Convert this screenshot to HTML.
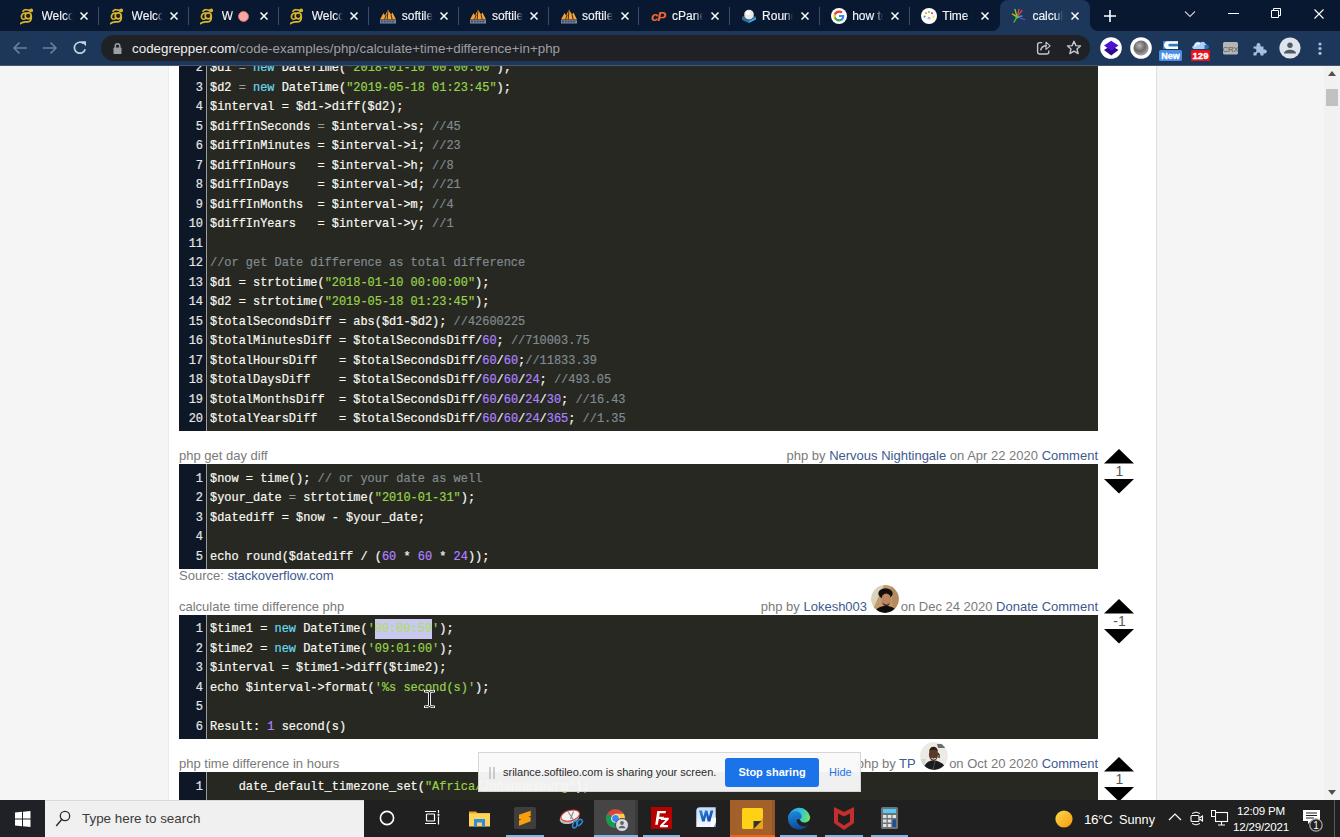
<!DOCTYPE html>
<html><head><meta charset="utf-8">
<style>
*{margin:0;padding:0;box-sizing:border-box}
html,body{width:1340px;height:837px;overflow:hidden;background:#f5f5f5;font-family:"Liberation Sans",sans-serif}
#tabs{position:absolute;left:0;top:0;width:1340px;height:31px;background:#081830}
#activetab{position:absolute;left:1000px;top:0;width:90px;height:31px;background:#1c375a;border-radius:8px 8px 0 0}
#activetab:before,#activetab:after{content:"";position:absolute;bottom:0;width:8px;height:8px}
#activetab:before{left:-8px;background:radial-gradient(circle at 0 0,transparent 7.5px,#1c375a 8.5px)}
#activetab:after{right:-8px;background:radial-gradient(circle at 100% 0,transparent 7.5px,#1c375a 8.5px)}
.ticon{position:absolute;top:8px;width:16px;height:16px}
.ticon svg{display:block}
.ttitle{position:absolute;top:8px;height:16px;font-size:12px;line-height:16px;color:#f2f4f7;white-space:nowrap;-webkit-text-stroke:.15px #f2f4f7;overflow:hidden;-webkit-mask-image:linear-gradient(90deg,#000 75%,transparent 100%)}
.tclose{position:absolute;top:12px;width:8px;height:8px}
.tclose svg{display:block}
.tsep{position:absolute;top:7px;width:1px;height:18px;background:#3e4d63}
.rec{position:absolute;top:10.5px;width:11px;height:11px;border-radius:50%;background:#f7a9a3;border:1.6px solid #e0625c}
#toolbar{position:absolute;left:0;top:31px;width:1340px;height:35px;background:#1c375a;border-bottom:1px solid #45566f}
#omni{position:absolute;left:101px;top:35px;width:989px;height:25.7px;border-radius:13px;background:#202124}
.url{position:absolute;left:31px;top:1px;line-height:26px;font-size:13.38px;color:#9aa0a6;white-space:nowrap}
.url b{font-weight:normal;color:#eef0f2}
.ti{position:absolute}
.ti svg{display:block}
#page{position:absolute;left:0;top:66px;width:1340px;height:734px;background:#f5f5f5;overflow:hidden}
#content{position:absolute;left:168px;top:0;width:988px;height:734px;background:#fff;border-left:1px solid #ebebeb}
#rightbg{position:absolute;left:1156px;top:0;width:168px;height:734px;background:#f5f5f5;border-left:1px solid #e0e0e0}
#scroll{position:absolute;left:1324px;top:0;width:16px;height:734px;background:#f1f1f1}
#thumb{position:absolute;left:2px;top:23px;width:12px;height:17px;background:#c1c1c1}
#taskbar{position:absolute;left:0;top:800px;width:1340px;height:37px;background:#202020}
.code{position:absolute;left:179px;width:919px;background:#272822;font-family:"Liberation Mono",monospace;font-size:11.94px;line-height:19.5px;white-space:pre;color:#f8f8f2;-webkit-text-stroke:0.2px}
.gut{position:absolute;left:0;top:0;bottom:0;width:27.5px;background:#0e1726;border-right:1.5px solid #9c9e9a}
.ln{position:absolute;left:0;width:24px;text-align:right;color:#e6e6e6}
.tx{position:absolute;left:31px}
.k{color:#66d9ef}.s{color:#96d248}.c{color:#808a8f}.n{color:#ae81ff}.o{color:#9a9a90}.sel{background:#c9c9ef;color:#b2dc6a;padding:2.8px 0}
.ttl{position:absolute;left:179px;font-size:13px;color:#7a7a7a;white-space:nowrap;line-height:15px}
.meta{position:absolute;right:242px;font-size:13px;color:#7a7a7a;white-space:nowrap;line-height:15px}
.lk{color:#40598f}
.vt{position:absolute;display:block}
.vn{position:absolute;left:1104.5px;width:30px;text-align:center;font-size:14px;line-height:15px;color:#555}
.avw{display:inline-block;position:relative;width:28px;height:0;margin:0 1.5px 0 0.5px}.av{position:absolute;left:0;bottom:-2.2px}
#share{position:absolute;left:478px;top:751.5px;width:383px;height:40px;background:rgba(249,249,249,.96);border:1px solid #d6d6d6}
.shtxt{position:absolute;left:24px;top:0;line-height:38px;font-size:11px;color:#2a2a2a;white-space:nowrap}
.shbtn{position:absolute;left:246px;top:5px;width:94px;height:29px;background:#1a73e8;border-radius:3px;color:#fff;font-size:11px;font-weight:bold;line-height:29px;text-align:center}
.shhide{position:absolute;left:350px;top:0;line-height:38px;font-size:11px;color:#1a73e8}
#search{position:absolute;left:45px;top:0;width:319px;height:37px;background:#f0f0f0;border-top:1px solid #d9d9d9}
.stxt{position:absolute;left:37px;top:0;line-height:36px;font-size:13.4px;color:#3a3a3a;white-space:nowrap}
.ul{position:absolute;top:35px;height:2px;background:#76b9ed}
.tt{position:absolute;font-size:13.5px;line-height:18px;color:#fff;white-space:nowrap}
.tc{position:absolute;font-size:11.6px;line-height:15px;color:#fff;text-align:center;white-space:nowrap;letter-spacing:-.2px}
</style></head><body>
<div id="tabs"><div id="activetab"></div><div class="ticon" style="left:20.0px"><svg width="16" height="17" viewBox="0 0 16 17"><g fill="none" stroke="#d9b52a" stroke-width="1.7" stroke-linecap="round"><path d="M3 3.2C4.5 1 8 1.6 9.6 2.8 10.6 .9 12.6 1 12.2 2.9 11.8 3.8 10.3 3.5 9.6 2.8"/><path d="M5.6 5.2C2.4 4.6.9 7.6 1.6 9.7 2.4 11.8 5 11.6 5.8 10.2"/><circle cx="8.2" cy="7.8" r="3"/><path d="M11.2 8.2C11.8 12.6 9.4 14.2 6.4 13.9 4.2 13.7 2.2 14 .4 15.6"/></g><ellipse cx="8.6" cy="7.4" rx="1.3" ry="1" fill="#3a2a08"/></svg></div><div class="ttitle" style="left:41.5px;width:31px">Welcome to Softileo</div><div class="tclose" style="left:80.0px"><svg width="8" height="8" viewBox="0 0 8 8"><path d="M.5.5l7 7M7.5.5l-7 7" stroke="#fff" stroke-width="1.5"/></svg></div><div class="tsep" style="left:98px"></div><div class="ticon" style="left:110.1px"><svg width="16" height="17" viewBox="0 0 16 17"><g fill="none" stroke="#d9b52a" stroke-width="1.7" stroke-linecap="round"><path d="M3 3.2C4.5 1 8 1.6 9.6 2.8 10.6 .9 12.6 1 12.2 2.9 11.8 3.8 10.3 3.5 9.6 2.8"/><path d="M5.6 5.2C2.4 4.6.9 7.6 1.6 9.7 2.4 11.8 5 11.6 5.8 10.2"/><circle cx="8.2" cy="7.8" r="3"/><path d="M11.2 8.2C11.8 12.6 9.4 14.2 6.4 13.9 4.2 13.7 2.2 14 .4 15.6"/></g><ellipse cx="8.6" cy="7.4" rx="1.3" ry="1" fill="#3a2a08"/></svg></div><div class="ttitle" style="left:131.6px;width:31px">Welcome to Softileo</div><div class="tclose" style="left:170.1px"><svg width="8" height="8" viewBox="0 0 8 8"><path d="M.5.5l7 7M7.5.5l-7 7" stroke="#fff" stroke-width="1.5"/></svg></div><div class="tsep" style="left:188px"></div><div class="ticon" style="left:200.2px"><svg width="16" height="17" viewBox="0 0 16 17"><g fill="none" stroke="#d9b52a" stroke-width="1.7" stroke-linecap="round"><path d="M3 3.2C4.5 1 8 1.6 9.6 2.8 10.6 .9 12.6 1 12.2 2.9 11.8 3.8 10.3 3.5 9.6 2.8"/><path d="M5.6 5.2C2.4 4.6.9 7.6 1.6 9.7 2.4 11.8 5 11.6 5.8 10.2"/><circle cx="8.2" cy="7.8" r="3"/><path d="M11.2 8.2C11.8 12.6 9.4 14.2 6.4 13.9 4.2 13.7 2.2 14 .4 15.6"/></g><ellipse cx="8.6" cy="7.4" rx="1.3" ry="1" fill="#3a2a08"/></svg></div><div class="ttitle" style="left:221.7px;width:13px">W</div><div class="rec" style="left:238.2px"></div><div class="tclose" style="left:260.2px"><svg width="8" height="8" viewBox="0 0 8 8"><path d="M.5.5l7 7M7.5.5l-7 7" stroke="#fff" stroke-width="1.5"/></svg></div><div class="tsep" style="left:278px"></div><div class="ticon" style="left:290.2px"><svg width="16" height="17" viewBox="0 0 16 17"><g fill="none" stroke="#d9b52a" stroke-width="1.7" stroke-linecap="round"><path d="M3 3.2C4.5 1 8 1.6 9.6 2.8 10.6 .9 12.6 1 12.2 2.9 11.8 3.8 10.3 3.5 9.6 2.8"/><path d="M5.6 5.2C2.4 4.6.9 7.6 1.6 9.7 2.4 11.8 5 11.6 5.8 10.2"/><circle cx="8.2" cy="7.8" r="3"/><path d="M11.2 8.2C11.8 12.6 9.4 14.2 6.4 13.9 4.2 13.7 2.2 14 .4 15.6"/></g><ellipse cx="8.6" cy="7.4" rx="1.3" ry="1" fill="#3a2a08"/></svg></div><div class="ttitle" style="left:311.7px;width:31px">Welcome to Softileo</div><div class="tclose" style="left:350.2px"><svg width="8" height="8" viewBox="0 0 8 8"><path d="M.5.5l7 7M7.5.5l-7 7" stroke="#fff" stroke-width="1.5"/></svg></div><div class="tsep" style="left:368px"></div><div class="ticon" style="left:380.3px"><svg width="16" height="16" viewBox="0 0 16 16"><path d="M0 11.5L3.5 5 5 7.5 8 1.5l3 5 1.5-2L16 11.5z" fill="#f2a33a"/><path d="M8 1.5L7.2 11.5M4.5 11.5l1.8-5M11 6.5l1.2 5" stroke="#4a2c0a" stroke-width="1"/><rect x="0" y="12.2" width="16" height="3.3" fill="#7d8ca6"/><path d="M1 13.8h14" stroke="#1e2c48" stroke-width="1" stroke-dasharray="2 .8"/></svg></div><div class="ttitle" style="left:401.8px;width:31px">softileo</div><div class="tclose" style="left:440.3px"><svg width="8" height="8" viewBox="0 0 8 8"><path d="M.5.5l7 7M7.5.5l-7 7" stroke="#fff" stroke-width="1.5"/></svg></div><div class="tsep" style="left:458px"></div><div class="ticon" style="left:470.4px"><svg width="16" height="16" viewBox="0 0 16 16"><path d="M0 11.5L3.5 5 5 7.5 8 1.5l3 5 1.5-2L16 11.5z" fill="#f2a33a"/><path d="M8 1.5L7.2 11.5M4.5 11.5l1.8-5M11 6.5l1.2 5" stroke="#4a2c0a" stroke-width="1"/><rect x="0" y="12.2" width="16" height="3.3" fill="#7d8ca6"/><path d="M1 13.8h14" stroke="#1e2c48" stroke-width="1" stroke-dasharray="2 .8"/></svg></div><div class="ttitle" style="left:491.9px;width:31px">softileo</div><div class="tclose" style="left:530.4px"><svg width="8" height="8" viewBox="0 0 8 8"><path d="M.5.5l7 7M7.5.5l-7 7" stroke="#fff" stroke-width="1.5"/></svg></div><div class="tsep" style="left:548px"></div><div class="ticon" style="left:560.5px"><svg width="16" height="16" viewBox="0 0 16 16"><path d="M0 11.5L3.5 5 5 7.5 8 1.5l3 5 1.5-2L16 11.5z" fill="#f2a33a"/><path d="M8 1.5L7.2 11.5M4.5 11.5l1.8-5M11 6.5l1.2 5" stroke="#4a2c0a" stroke-width="1"/><rect x="0" y="12.2" width="16" height="3.3" fill="#7d8ca6"/><path d="M1 13.8h14" stroke="#1e2c48" stroke-width="1" stroke-dasharray="2 .8"/></svg></div><div class="ttitle" style="left:582.0px;width:31px">softileo</div><div class="tclose" style="left:620.5px"><svg width="8" height="8" viewBox="0 0 8 8"><path d="M.5.5l7 7M7.5.5l-7 7" stroke="#fff" stroke-width="1.5"/></svg></div><div class="tsep" style="left:638px"></div><div class="ticon" style="left:650.6px"><svg width="18" height="16" viewBox="0 0 18 16"><text x="0" y="12.5" font-family="Liberation Sans" font-weight="bold" font-style="italic" font-size="13" fill="#f36b2c" letter-spacing="-1">cP</text></svg></div><div class="ttitle" style="left:672.1px;width:31px">cPanel</div><div class="tclose" style="left:710.6px"><svg width="8" height="8" viewBox="0 0 8 8"><path d="M.5.5l7 7M7.5.5l-7 7" stroke="#fff" stroke-width="1.5"/></svg></div><div class="tsep" style="left:729px"></div><div class="ticon" style="left:740.6px"><svg width="16" height="16" viewBox="0 0 16 16"><path d="M1 9l7 3.5L15 9v2.5L8 15 1 11.5z" fill="#37a7e8"/><path d="M1 9l7 3.5V15L1 11.5z" fill="#2a6e98"/><path d="M1 9l3-1.5h8L15 9l-7 3.5z" fill="#5a6a78"/><circle cx="8" cy="6.5" r="4.8" fill="#e8e8e8"/><circle cx="7" cy="5" r="2" fill="#fff"/></svg></div><div class="ttitle" style="left:762.1px;width:31px">Roundcube</div><div class="tclose" style="left:800.6px"><svg width="8" height="8" viewBox="0 0 8 8"><path d="M.5.5l7 7M7.5.5l-7 7" stroke="#fff" stroke-width="1.5"/></svg></div><div class="tsep" style="left:819px"></div><div class="ticon" style="left:830.7px"><svg width="16" height="16" viewBox="0 0 16 16"><circle cx="8" cy="8" r="8" fill="#fff"/><path d="M13.3 8.1c0-.4 0-.8-.1-1.1H8v2.1h3c-.1.7-.5 1.3-1.1 1.7v1.4h1.8c1-1 1.6-2.4 1.6-4.1z" fill="#4285f4"/><path d="M8 13.5c1.5 0 2.8-.5 3.7-1.4l-1.8-1.4c-.5.3-1.1.5-1.9.5-1.4 0-2.7-1-3.1-2.3H3v1.4c.9 1.9 2.8 3.2 5 3.2z" fill="#34a853"/><path d="M4.9 8.9c-.1-.3-.2-.6-.2-.9s.1-.7.2-1V5.6H3C2.7 6.3 2.5 7.1 2.5 8s.2 1.7.5 2.4z" fill="#fbbc05"/><path d="M8 4.7c.8 0 1.5.3 2.1.8l1.6-1.6C10.7 3 9.5 2.5 8 2.5c-2.2 0-4.1 1.3-5 3.1l1.9 1.4C5.3 5.7 6.6 4.7 8 4.7z" fill="#ea4335"/></svg></div><div class="ttitle" style="left:852.2px;width:31px">how to calculate</div><div class="tclose" style="left:890.7px"><svg width="8" height="8" viewBox="0 0 8 8"><path d="M.5.5l7 7M7.5.5l-7 7" stroke="#fff" stroke-width="1.5"/></svg></div><div class="tsep" style="left:909px"></div><div class="ticon" style="left:920.8px"><svg width="16" height="16" viewBox="0 0 16 16"><circle cx="8" cy="8" r="8" fill="#fff"/><circle cx="3.6" cy="8.6" r="1.1" fill="#3aa0f0"/><circle cx="5" cy="5.2" r="1.1" fill="#f5a623"/><circle cx="8" cy="4" r="1.1" fill="#7ed321"/><circle cx="11" cy="5.2" r="1.1" fill="#e94b9a"/><circle cx="12.4" cy="8.6" r="1.1" fill="#f8e71c"/><path d="M6.2 10.4q1.8 1.6 3.6 0" stroke="#b0b0b0" stroke-width="0.8" fill="none"/><circle cx="8" cy="9.8" r=".8" fill="#9b59b6"/></svg></div><div class="ttitle" style="left:942.3px;width:31px">Time Difference</div><div class="tclose" style="left:980.8px"><svg width="8" height="8" viewBox="0 0 8 8"><path d="M.5.5l7 7M7.5.5l-7 7" stroke="#fff" stroke-width="1.5"/></svg></div><div class="ticon" style="left:1010.9px"><svg width="16" height="16" viewBox="0 0 16 16"><g stroke-width="1.3" stroke-linecap="round"><path d="M6 9L3 14" stroke="#55c92a"/><path d="M6 9L1.5 6" stroke="#f2c500"/><path d="M6 9L8 1.5" stroke="#e24b3b"/><path d="M6 9L11 2.5" stroke="#c44"/><path d="M6 9L13.5 11.5" stroke="#8e44ad"/><path d="M6 9L11 8" stroke="#3498db"/><path d="M6 9L4 1.5" stroke="#7bd13a"/></g><circle cx="6" cy="9" r="1.6" fill="#55c92a"/></svg></div><div class="ttitle" style="left:1032.4px;width:31px">calculate time</div><div class="tclose" style="left:1070.9px"><svg width="8" height="8" viewBox="0 0 8 8"><path d="M.5.5l7 7M7.5.5l-7 7" stroke="#fff" stroke-width="1.5"/></svg></div>
<div class="ti" style="left:1103px;top:9px"><svg width="14" height="14" viewBox="0 0 14 14"><path d="M7 1v12M1 7h12" stroke="#fff" stroke-width="1.6"/></svg></div>
<div class="ti" style="left:1184px;top:9.5px"><svg width="12" height="8" viewBox="0 0 12 8"><path d="M1 1.5l5 5 5-5" stroke="#c8cdd5" stroke-width="1.1" fill="none"/></svg></div>
<div class="ti" style="left:1228px;top:13px"><svg width="11" height="2" viewBox="0 0 11 2"><path d="M0 .5h11" stroke="#fff" stroke-width="1"/></svg></div>
<div class="ti" style="left:1271px;top:8px"><svg width="10" height="10" viewBox="0 0 10 10"><path d="M.5 2.5h7v7h-7z M2.5 2.5V.5h7v7h-2" stroke="#fff" stroke-width="1" fill="none"/></svg></div>
<div class="ti" style="left:1313.5px;top:8.5px"><svg width="10" height="10" viewBox="0 0 10 10"><path d="M.5.5l9 9M9.5.5l-9 9" stroke="#fff" stroke-width="1.1"/></svg></div>
</div>
<div id="toolbar"></div>
<div class="ti" style="left:12px;top:41px"><svg width="16" height="14" viewBox="0 0 16 14"><path d="M15 7H2M7.5 1.5L2 7l5.5 5.5" stroke="#6c819d" stroke-width="1.6" fill="none"/></svg></div>
<div class="ti" style="left:42px;top:41px"><svg width="16" height="14" viewBox="0 0 16 14"><path d="M1 7h13M8.5 1.5L14 7l-5.5 5.5" stroke="#6c819d" stroke-width="1.6" fill="none"/></svg></div>
<div class="ti" style="left:72px;top:40px"><svg width="16" height="16" viewBox="0 0 16 16"><path d="M13.2 9.2A5.5 5.5 0 1 1 11.6 3.6" stroke="#c6d2e2" stroke-width="1.7" fill="none"/><path d="M9 1.2h5v5z" fill="#c6d2e2"/></svg></div>
<div id="omni">
<div class="ti" style="left:12px;top:6.5px"><svg width="9" height="13" viewBox="0 0 9 13"><path d="M2.2 6V4a2.3 2.3 0 0 1 4.6 0V6" stroke="#9aa0a6" stroke-width="1.4" fill="none"/><rect x="0.5" y="5.5" width="8" height="6.5" rx=".8" fill="#9aa0a6"/></svg></div>
<div class="url"><b>codegrepper.com</b>/code-examples/php/calculate+time+difference+in+php</div>
<div class="ti" style="left:935px;top:5.5px"><svg width="16" height="15" viewBox="0 0 16 15"><path d="M6.2 1.6H3.6A2 2 0 0 0 1.6 3.6v7.4a2 2 0 0 0 2 2h7.2a2 2 0 0 0 2-2v-1.6" stroke="#c4c7cb" stroke-width="1.4" fill="none"/><path d="M4.6 9.4C5.2 6.4 7.4 4.8 10.6 4.8" stroke="#c4c7cb" stroke-width="1.5" fill="none"/><path d="M10 1.2l4.2 3.6L10 8.4z" stroke="#c4c7cb" stroke-width="1.1" fill="none" stroke-linejoin="round"/></svg></div>
<div class="ti" style="left:965px;top:5px"><svg width="16" height="16" viewBox="0 0 16 16"><path d="M8 1.3l1.9 4.3 4.6.4-3.5 3 1.1 4.6L8 11.2l-4.1 2.4L5 9l-3.5-3 4.6-.4z" stroke="#c4c9cf" stroke-width="1.4" fill="none" stroke-linejoin="round"/></svg></div>
</div>
<div class="ti" style="left:1100px;top:37px"><svg width="22" height="22" viewBox="0 0 22 22"><circle cx="11" cy="11" r="10.8" fill="#fff"/><path d="M11.2 8.5L18.5 13l-7.3 5.5L4 13z" fill="#2b0a8f"/><path d="M11.2 3.7L18.5 8.5l-7.3 5L4 8.5z" fill="#4d14d0"/></svg></div>
<div class="ti" style="left:1130px;top:37px"><svg width="22" height="22" viewBox="0 0 22 22"><defs><radialGradient id="sph" cx="0.4" cy="0.35" r="0.6"><stop offset="0" stop-color="#b8b8b8"/><stop offset="0.6" stop-color="#6a6a6a"/><stop offset="1" stop-color="#9a9a9a"/></radialGradient></defs><circle cx="11" cy="11" r="10.8" fill="#fff"/><circle cx="11" cy="11" r="7.6" fill="url(#sph)"/></svg></div>
<div class="ti" style="left:1159px;top:40px"><svg width="24" height="22" viewBox="0 0 24 22"><rect x="4" y="1" width="15" height="8" fill="#3b84cf"/><path d="M8.5 1.2H19v2.6h-8.6c-1.5 0-1.5 2.6 0 2.6H19v2.6H8.5c-4.6 0-4.6-7.8 0-7.8z" fill="#fbfdff"/><path d="M11 4.6h7.5v1.2H11z" fill="#2a6cb8"/><rect x="0" y="10" width="23" height="11" rx="1.5" fill="#4a8ee8"/><text x="11.5" y="19" font-family="Liberation Sans" font-weight="bold" font-size="9" fill="#fff" stroke="#fff" stroke-width=".35" text-anchor="middle">New</text></svg></div>
<div class="ti" style="left:1191px;top:40px"><svg width="20" height="22" viewBox="0 0 20 22"><path d="M3 9c-2 0-2.5-3 0-3.5C3.5 2 7 1 9.5 2.5 11 1 14 1.5 14.5 4c2 0 2.5 5-.5 5z" fill="#a9d0f5"/><path d="M4 6.5C4.5 4 7 3 9 4" stroke="#fff" stroke-width="1.5" fill="none"/><path d="M13.5 5h2.5a2 2 0 0 1 0 4h-2.5z" fill="#2a70c0"/><rect x="0" y="10" width="19" height="11" rx="1" fill="#ea1118"/><text x="9.5" y="19" font-family="Liberation Sans" font-weight="bold" font-size="9.5" fill="#fff" stroke="#fff" stroke-width=".35" text-anchor="middle">129</text></svg></div>
<div class="ti" style="left:1223px;top:42px"><svg width="15" height="13" viewBox="0 0 15 13"><rect x="0" y="0" width="15" height="12.5" rx="1.5" fill="#b5b5b5"/><text x="7.5" y="9.5" font-family="Liberation Sans" font-size="8" fill="#5a5a5a" text-anchor="middle" letter-spacing="-.3">CRX</text></svg></div>
<div class="ti" style="left:1252px;top:41px"><svg width="16" height="15" viewBox="0 0 16 15"><path d="M1.5 5.5h3V4a2 2 0 0 1 4 0v1.5h3v3h1.3a2 2 0 0 1 0 4H11.5v2h-3v-1a2 2 0 0 0-4 0v1h-3v-3h1a2 2 0 0 0 0-4h-1z" fill="#a9c0e2"/></svg></div>
<div class="ti" style="left:1279px;top:37px"><svg width="22" height="22" viewBox="0 0 22 22"><circle cx="11" cy="11" r="10.6" fill="#dfe3ea"/><circle cx="11" cy="8.3" r="2.7" fill="#4e5a69"/><path d="M5 16.5c0-2.6 3-3.8 6-3.8s6 1.2 6 3.8z" fill="#4e5a69"/></svg></div>
<div class="ti" style="left:1318px;top:42px"><svg width="4" height="14" viewBox="0 0 4 14"><circle cx="2" cy="2" r="1.6" fill="#a8bfe0"/><circle cx="2" cy="6.6" r="1.6" fill="#a8bfe0"/><circle cx="2" cy="11.3" r="1.6" fill="#a8bfe0"/></svg></div>

<div id="page">
  <div id="content"></div>
  <div id="rightbg"></div>
  <div id="scroll"><svg style="position:absolute;left:4px;top:5px" width="8" height="5" viewBox="0 0 8 5"><path d="M4 0L8 5H0z" fill="#505050"/></svg><div id="thumb"></div><svg style="position:absolute;left:4px;top:724px" width="8" height="5" viewBox="0 0 8 5"><path d="M0 0H8L4 5z" fill="#505050"/></svg></div>
<div class="ttl" style="left:179px;top:381.7px">php get day diff</div><div class="meta" style="top:381.7px">php by <span class="lk">Nervous Nightingale</span> on Apr 22 2020 <span class="lk">Comment</span></div><div class="ttl" style="left:179px;top:502.2px">Source: <span class="lk">stackoverflow.com</span></div><div class="ttl" style="left:179px;top:532.8px">calculate time difference php</div><div class="meta" style="top:532.8px">php by <span class="lk">Lokesh003</span> <span class="avw"><svg class="av" width="28" height="28" viewBox="0 0 28 28"><defs><clipPath id="c1"><circle cx="14" cy="14" r="13.9"/></clipPath><filter id="bl" x="-10%" y="-10%" width="120%" height="120%"><feGaussianBlur stdDeviation=".6"/></filter></defs><g clip-path="url(#c1)"><g filter="url(#bl)"><rect width="28" height="28" fill="#c29a6c"/><path d="M0 0H13L7 13 3 22H0z" fill="#d9d2bc"/><path d="M20 0H28V28H22z" fill="#b48a5e"/><ellipse cx="14.5" cy="8.5" rx="7.2" ry="5.2" fill="#141010"/><ellipse cx="15.2" cy="14.8" rx="4.8" ry="6.3" fill="#bb8764"/><path d="M9.5 8.5c1-2.5 3.5-4 6-3.8 2.6.2 4.6 1.8 5 4.2-1.2-1-3-1.6-5.2-1.5-2.4 0-4.4.6-5.8 1.1z" fill="#161010"/><path d="M11 17c.8 3 2.5 4.3 4.2 4.3s3.3-1.3 4-4.1c-.8 1.6-2.3 2.3-4 2.3-1.8 0-3.3-.9-4.2-2.5z" fill="#3a2618"/><path d="M4 28c1-5 5-7 11-7s9.5 2 11 7z" fill="#110b09"/></g></g></svg></span>on Dec 24 2020 <span class="lk">Donate</span> <span class="lk">Comment</span></div><div class="ttl" style="left:179px;top:689.6px">php time difference in hours</div><div class="meta" style="top:689.6px">php by <span class="lk">TP</span> <span class="avw"><svg class="av" width="28" height="28" viewBox="0 0 28 28"><defs><clipPath id="c2"><circle cx="14" cy="14" r="13.9"/></clipPath><filter id="bl2" x="-10%" y="-10%" width="120%" height="120%"><feGaussianBlur stdDeviation=".6"/></filter></defs><g clip-path="url(#c2)"><g filter="url(#bl2)"><rect width="28" height="28" fill="#ebeae5"/><path d="M17 2h8l1 4h-8z" fill="#6a6a66"/><path d="M0 17h6l-2 6H0z" fill="#d4d4d0"/><ellipse cx="13.5" cy="12.5" rx="4.6" ry="6.4" fill="#5a3a28"/><path d="M9 10c.3-3.5 2.2-5.3 4.5-5.3s4.3 1.8 4.6 5.3c-1.2-1.6-2.7-2.2-4.6-2.2s-3.4.6-4.5 2.2z" fill="#2a1c14"/><path d="M11.5 16.3q2.2 1.6 4.4 0" stroke="#eee" stroke-width="1" fill="none"/><path d="M3 27c2-6 5.5-8.5 10.5-8.5 5 0 9.5 2.5 12 7v3H3z" fill="#1e1e1e"/><path d="M15 19l-2 9" stroke="#4a4a4a" stroke-width="1"/><path d="M18 11c1 1 1.5 3 1 5" stroke="#2a2a2a" stroke-width="1.4" fill="none"/></g></g></svg></span>on Oct 20 2020 <span class="lk">Comment</span></div><svg class="vt" style="left:1104.2px;top:383.0px" width="30" height="15" viewBox="0 0 30 15"><path d="M15 0L30 14.5H0z" fill="#000"/></svg><div class="vn" style="top:398.0px">1</div><svg class="vt" style="left:1104.2px;top:412.6px" width="30" height="15" viewBox="0 0 30 15"><path d="M0 0H30L15 14.5z" fill="#000"/></svg><svg class="vt" style="left:1104.2px;top:533.4px" width="30" height="15" viewBox="0 0 30 15"><path d="M15 0L30 14.5H0z" fill="#000"/></svg><div class="vn" style="top:548.4px">-1</div><svg class="vt" style="left:1104.2px;top:563.0px" width="30" height="15" viewBox="0 0 30 15"><path d="M0 0H30L15 14.5z" fill="#000"/></svg><svg class="vt" style="left:1104.2px;top:691.1px" width="30" height="15" viewBox="0 0 30 15"><path d="M15 0L30 14.5H0z" fill="#000"/></svg><div class="vn" style="top:706.1px">1</div><svg class="vt" style="left:1104.2px;top:720.7px" width="30" height="15" viewBox="0 0 30 15"><path d="M0 0H30L15 14.5z" fill="#000"/></svg><div class="code" style="top:-31.80px;height:397.00px"><div class="gut"></div><div class="ln" style="top:5.5px">1</div><div class="tx" style="top:5.5px">$d1 = <span class="k">new</span> DateTime(<span class="s">&quot;2018-01-10 00:00:00&quot;</span>);</div><div class="ln" style="top:25.0px">2</div><div class="tx" style="top:25.0px">$d1 <span class="o">=</span> <span class="k">new</span> DateTime(<span class="s">&quot;2018-01-10 00:00:00&quot;</span>);</div><div class="ln" style="top:44.5px">3</div><div class="tx" style="top:44.5px">$d2 <span class="o">=</span> <span class="k">new</span> DateTime(<span class="s">&quot;2019-05-18 01:23:45&quot;</span>);</div><div class="ln" style="top:64.0px">4</div><div class="tx" style="top:64.0px">$interval = $d1-&gt;diff($d2);</div><div class="ln" style="top:83.5px">5</div><div class="tx" style="top:83.5px">$diffInSeconds <span class="o">=</span> $interval-&gt;s; <span class="c">//45</span></div><div class="ln" style="top:103.0px">6</div><div class="tx" style="top:103.0px">$diffInMinutes = $interval-&gt;i; <span class="c">//23</span></div><div class="ln" style="top:122.5px">7</div><div class="tx" style="top:122.5px">$diffInHours   = $interval-&gt;h; <span class="c">//8</span></div><div class="ln" style="top:142.0px">8</div><div class="tx" style="top:142.0px">$diffInDays    = $interval-&gt;d; <span class="c">//21</span></div><div class="ln" style="top:161.5px">9</div><div class="tx" style="top:161.5px">$diffInMonths  = $interval-&gt;m; <span class="c">//4</span></div><div class="ln" style="top:181.0px">10</div><div class="tx" style="top:181.0px">$diffInYears   = $interval-&gt;y; <span class="c">//1</span></div><div class="ln" style="top:200.5px">11</div><div class="tx" style="top:200.5px"></div><div class="ln" style="top:220.0px">12</div><div class="tx" style="top:220.0px"><span class="c">//or get Date difference as total difference</span></div><div class="ln" style="top:239.5px">13</div><div class="tx" style="top:239.5px">$d1 = strtotime(<span class="s">&quot;2018-01-10 00:00:00&quot;</span>);</div><div class="ln" style="top:259.0px">14</div><div class="tx" style="top:259.0px">$d2 = strtotime(<span class="s">&quot;2019-05-18 01:23:45&quot;</span>);</div><div class="ln" style="top:278.5px">15</div><div class="tx" style="top:278.5px">$totalSecondsDiff = abs($d1-$d2); <span class="c">//42600225</span></div><div class="ln" style="top:298.0px">16</div><div class="tx" style="top:298.0px">$totalMinutesDiff = $totalSecondsDiff/<span class="n">60</span>; <span class="c">//710003.75</span></div><div class="ln" style="top:317.5px">17</div><div class="tx" style="top:317.5px">$totalHoursDiff   = $totalSecondsDiff/<span class="n">60</span>/<span class="n">60</span>;<span class="c">//11833.39</span></div><div class="ln" style="top:337.0px">18</div><div class="tx" style="top:337.0px">$totalDaysDiff    = $totalSecondsDiff/<span class="n">60</span>/<span class="n">60</span>/<span class="n">24</span>; <span class="c">//493.05</span></div><div class="ln" style="top:356.5px">19</div><div class="tx" style="top:356.5px">$totalMonthsDiff  = $totalSecondsDiff/<span class="n">60</span>/<span class="n">60</span>/<span class="n">24</span>/<span class="n">30</span>; <span class="c">//16.43</span></div><div class="ln" style="top:376.0px">20</div><div class="tx" style="top:376.0px">$totalYearsDiff   = $totalSecondsDiff/<span class="n">60</span>/<span class="n">60</span>/<span class="n">24</span>/<span class="n">365</span>; <span class="c">//1.35</span></div></div><div class="code" style="top:398.20px;height:104.50px"><div class="gut"></div><div class="ln" style="top:5.5px">1</div><div class="tx" style="top:5.5px">$now = time(); <span class="c">// or your date as well</span></div><div class="ln" style="top:25.0px">2</div><div class="tx" style="top:25.0px">$your_date <span class="o">=</span> strtotime(<span class="s">&quot;2010-01-31&quot;</span>);</div><div class="ln" style="top:44.5px">3</div><div class="tx" style="top:44.5px">$datediff = $now - $your_date;</div><div class="ln" style="top:64.0px">4</div><div class="tx" style="top:64.0px"></div><div class="ln" style="top:83.5px">5</div><div class="tx" style="top:83.5px">echo round($datediff / (<span class="n">60</span> * <span class="n">60</span> * <span class="n">24</span>));</div></div><div class="code" style="top:548.60px;height:124.00px"><div class="gut"></div><div class="ln" style="top:5.5px">1</div><div class="tx" style="top:5.5px">$time1 = <span class="k">new</span> DateTime(<span class="s">&#x27;</span><span class="sel">09:00:59</span><span class="s">&#x27;</span>);</div><div class="ln" style="top:25.0px">2</div><div class="tx" style="top:25.0px">$time2 = <span class="k">new</span> DateTime(<span class="s">&#x27;09:01:00&#x27;</span>);</div><div class="ln" style="top:44.5px">3</div><div class="tx" style="top:44.5px">$interval = $time1-&gt;diff($time2);</div><div class="ln" style="top:64.0px">4</div><div class="tx" style="top:64.0px">echo $interval-&gt;format(<span class="s">&#x27;%s second(s)&#x27;</span>);</div><div class="ln" style="top:83.5px">5</div><div class="tx" style="top:83.5px"></div><div class="ln" style="top:103.0px">6</div><div class="tx" style="top:103.0px">Result: <span class="n">1</span> second(s)</div></div><div class="code" style="top:706.30px;height:46.00px"><div class="gut"></div><div class="ln" style="top:5.5px">1</div><div class="tx" style="top:5.5px">    date_default_timezone_set(<span class="s">&quot;Africa/Johannesburg&quot;</span>);</div><div class="ln" style="top:25.0px">2</div><div class="tx" style="top:25.0px"></div></div>
</div>
<div id="share">
  <div class="ti" style="left:10px;top:14px"><svg width="6" height="12" viewBox="0 0 6 12"><path d="M1 0v12M5 0v12" stroke="#b0b0b0" stroke-width="1.2"/></svg></div>
  <div class="shtxt">srilance.softileo.com is sharing your screen.</div>
  <div class="shbtn">Stop sharing</div>
  <div class="shhide">Hide</div>
</div>
<div id="taskbar">
  <div class="ti" style="left:0;top:0;width:45px;height:37px;background:#202126"></div>
  <div class="ti" style="left:15px;top:10.5px"><svg width="16" height="16" viewBox="0 0 16 16"><path d="M0 1.6L7 .8V7.5H0zM8 .7L15.5 0V7.5H8zM0 8.5h7v6.7L0 14.4zM8 8.5h7.5V16L8 15.3z" fill="#fff"/></svg></div>
  <div id="search"><div class="ti" style="left:10px;top:9px"><svg width="16" height="18" viewBox="0 0 16 18"><circle cx="10" cy="6" r="4.7" stroke="#2b2b2b" stroke-width="1.3" fill="none"/><path d="M6.7 9.5L1.2 16" stroke="#2b2b2b" stroke-width="1.4"/></svg></div>
  <div class="stxt">Type here to search</div></div>
  <div class="ti" style="left:379px;top:810px;top:10px"><svg width="16" height="16" viewBox="0 0 16 16"><circle cx="8" cy="8" r="6.6" stroke="#fff" stroke-width="1.6" fill="none"/></svg></div>
  <div class="ti" style="left:423px;top:9px"><svg width="18" height="17" viewBox="0 0 18 17"><path d="M2 2.5h11M2 14.5h11M3.5 5v7M11.5 5v7M3.5 5h8M3.5 12h8" stroke="#fff" stroke-width="1.2" fill="none"/><path d="M15.5 1v3M15.5 7.5v8" stroke="#fff" stroke-width="1.2"/><circle cx="15.5" cy="5.8" r="1.1" fill="#fff"/></svg></div>
  <!-- explorer -->
  <div class="ti" style="left:469px;top:10px"><svg width="21" height="17" viewBox="0 0 21 17"><path d="M0 1.5h7l1.5 1.5H21V4H0z" fill="#e6a817"/><rect x="0" y="3.5" width="21" height="13" fill="#ffd45c"/><path d="M5 9h11v8h-3v-4.5H8V17H5z" fill="#2e8ddf"/></svg></div>
  <!-- sublime -->
  <div class="ti" style="left:514px;top:7px;width:22px;height:22px;background:#3e3e3e;border-radius:2px"><svg width="22" height="22" viewBox="0 0 22 22"><path d="M5 7.8L16.7 3.7V9l-2.4.7 2.4.9v3.7L5 18.7v-5.4l2.5-.6L5 12z" fill="#fa9e0b"/></svg></div>
  <!-- snipping -->
  <div class="ti" style="left:559px;top:7px"><svg width="25" height="24" viewBox="0 0 25 24"><ellipse cx="10.5" cy="11" rx="10" ry="5.6" fill="#bdbdbd" transform="rotate(-15 10.5 11)"/><ellipse cx="11.2" cy="8.6" rx="9.6" ry="5.2" fill="#f3f3f3" stroke="#d83a3a" stroke-width="1.1" transform="rotate(-15 11.2 8.6)"/><path d="M9 4.5l5.5 8.5M14.5 4.5L11.5 12" stroke="#8a8a8a" stroke-width="1.1"/><ellipse cx="16" cy="17.5" rx="2.1" ry="3.6" stroke="#2a8ad4" stroke-width="1.6" fill="none" transform="rotate(20 16 17.5)"/><ellipse cx="20.5" cy="15.5" rx="2.1" ry="3.4" stroke="#2a8ad4" stroke-width="1.6" fill="none" transform="rotate(40 20.5 15.5)"/></svg></div>
  <!-- chrome active -->
  <div class="ti" style="left:594px;top:0;width:44px;height:37px;background:#454545"></div>
  <div class="ti" style="left:635px;top:0;width:3px;height:35px;background:#3a3a3a"></div>
  <div class="ti" style="left:605px;top:8px"><svg width="24" height="24" viewBox="0 0 24 24"><circle cx="10.5" cy="10.5" r="9.5" fill="#db4437"/><path d="M10.5 10.5L2.3 5.8A9.5 9.5 0 0 0 5.8 18.7z" fill="#0f9d58"/><path d="M10.5 10.5l-4.7 8.2A9.5 9.5 0 0 0 20 10.5z" fill="#0f9d58"/><path d="M10.5 10.5H20A9.5 9.5 0 0 0 18.7 5.8H10.5z" fill="#ffcd40"/><circle cx="10.5" cy="10.5" r="4.3" fill="#fff"/><circle cx="10.5" cy="10.5" r="3.4" fill="#4285f4"/><circle cx="17" cy="17" r="6.5" fill="#dadce0" stroke="#454545" stroke-width="1"/><circle cx="17" cy="15" r="1.9" fill="#5f6368"/><path d="M13.4 20.3c.4-1.8 1.8-2.6 3.6-2.6s3.2.8 3.6 2.6z" fill="#5f6368"/></svg></div>
  <!-- filezilla -->
  <div class="ti" style="left:651px;top:7px;width:21px;height:22px;background:#b80000"><svg width="21" height="22" viewBox="0 0 21 22"><path d="M6.3 4H15l-.5 2.2H8.8l-.6 3.5H13l-.4 2.2H7.8L6.8 17.8H4.2z" fill="#fff"/><path d="M10.2 10.8H18l-.4 1.8-5.4 5.4h4.9l-.4 2.2H8.8l.4-1.9 5.3-5.3h-4.7z" fill="#fff"/></svg></div>
  <!-- word -->
  <div class="ti" style="left:696px;top:7px"><svg width="21" height="21" viewBox="0 0 21 21"><defs><linearGradient id="wd" x1="0" y1="0" x2="0" y2="1"><stop offset="0" stop-color="#c4dcfa"/><stop offset="1" stop-color="#f4f8ff"/></linearGradient><linearGradient id="ww" x1="0" y1="0" x2="1" y2="1"><stop offset="0" stop-color="#2a8ae0"/><stop offset="1" stop-color="#0c3e9c"/></linearGradient></defs><path d="M4 .3h15.7V20H.3V4A3.7 3.7 0 0 1 4 .3z" fill="url(#wd)"/><path d="M3 3.5h3l1.4 6.2L9 3.5h2.4l1.6 6.2 1.4-6.2h3L14.3 14.5h-2.6L10.2 8.6 8.7 14.5H6.1z" fill="url(#ww)"/><path d="M15 12l5-1.5V20h-5z" fill="#fff"/><path d="M19.7 15v5h-1.5z" fill="#2a5ab0"/></svg></div>
  <!-- sticky active -->
  <div class="ti" style="left:730px;top:0;width:45px;height:37px;background:#a3602a"></div>
  <div class="ti" style="left:772px;top:0;width:3px;height:35px;background:#94552a"></div>
  <div class="ti" style="left:742px;top:8px"><svg width="21" height="21" viewBox="0 0 21 21"><rect x="0" y="0" width="21" height="21" rx="1.5" fill="#fcd116"/><path d="M21 10L10 21h9.5a1.5 1.5 0 0 0 1.5-1.5z" fill="#e8a317"/><path d="M11.5 21V13h8z" fill="#333"/></svg></div>
  <!-- edge -->
  <div class="ti" style="left:787px;top:5.5px"><svg width="24" height="24" viewBox="0 0 24 24"><defs><linearGradient id="eg1" x1="0" y1="0.3" x2="1" y2="0.5"><stop offset="0" stop-color="#2a9ee8"/><stop offset=".55" stop-color="#32c3d8"/><stop offset="1" stop-color="#6ee36a"/></linearGradient><linearGradient id="eg2" x1="0" y1="0" x2="0.3" y2="1"><stop offset="0" stop-color="#1f8ee0"/><stop offset="1" stop-color="#0b4d9c"/></linearGradient></defs><path d="M1 12.5A11.2 11.2 0 0 1 23.2 11c0 3.8-2.8 5.6-6 5.6-2.6 0-4.2-1.6-4.2-3.4z" fill="url(#eg1)"/><path d="M1 12.5C1 7 5.5 4.8 9.5 5.2c3.6.4 5.8 3.4 5 6.3-.6 2-3.4 2.4-4.6.8-.9 3.6 1.5 7.6 6.4 8.2 1.6.2 3.2-.2 4.6-.9-2 2.3-5.2 3.8-8.8 3.8C6 23.4 1 19 1 12.5z" fill="url(#eg2)"/></svg></div>
  <!-- mcafee -->
  <div class="ti" style="left:834px;top:7px"><svg width="20" height="23" viewBox="0 0 20 23"><path d="M0 0l10 5 10-5v16l-10 7-10-7z" fill="#c62d2d"/><path d="M4 6.5l6 3 6-3v8l-6 4-6-4z" fill="#202020"/></svg></div>
  <!-- calc -->
  <div class="ti" style="left:881px;top:7px;width:17px;height:22px;background:#6f7378;border-radius:1.5px"><svg width="17" height="23" viewBox="0 0 17 23"><rect x="2" y="2" width="13" height="4" fill="#52cdf6"/><g fill="#e2e2e2"><rect x="2" y="8" width="3.5" height="3"/><rect x="6.8" y="8" width="3.5" height="3"/><rect x="11.5" y="8" width="3.5" height="3"/><rect x="2" y="12.5" width="3.5" height="3"/><rect x="6.8" y="12.5" width="3.5" height="3"/><rect x="2" y="17" width="3.5" height="3"/><rect x="6.8" y="17" width="3.5" height="3"/></g><rect x="11.5" y="12.5" width="3.5" height="7.5" fill="#1e4f96"/></svg></div>
  <!-- underlines -->
  <div class="ul" style="left:506px;width:38px"></div>
  <div class="ul" style="left:594px;width:44px"></div>
  <div class="ul" style="left:643px;width:37px"></div>
  <div class="ul" style="left:730px;width:45px;background:#f7630c"></div>
  <div class="ul" style="left:780px;width:37px"></div>
  <div class="ul" style="left:825px;width:38px"></div>
  <div class="ul" style="left:871px;width:37px"></div>
  <!-- tray -->
  <div class="ti" style="left:1055px;top:10px"><svg width="18" height="18" viewBox="0 0 18 18"><defs><linearGradient id="sun" x1="0" y1="0" x2="1" y2="1"><stop offset="0" stop-color="#ffd84d"/><stop offset="1" stop-color="#f59a0c"/></linearGradient></defs><circle cx="9" cy="9" r="8.6" fill="url(#sun)"/></svg></div>
  <div class="tt" style="left:1084px;top:11px;letter-spacing:-.5px">16°C</div>
  <div class="tt" style="left:1119px;top:11px;font-size:12.7px">Sunny</div>
  <div class="ti" style="left:1168px;top:13px"><svg width="14" height="8" viewBox="0 0 14 8"><path d="M1 7l6-6 6 6" stroke="#fff" stroke-width="1.2" fill="none"/></svg></div>
  <div class="ti" style="left:1189px;top:10px"><svg width="16" height="17" viewBox="0 0 16 17"><path d="M3 3.5a7 7 0 0 1 8 0M3 13.5a7 7 0 0 0 8 0" stroke="#fff" stroke-width="1" fill="none"/><rect x="2" y="5.5" width="8" height="6" rx="1" stroke="#fff" stroke-width="1.1" fill="none"/><path d="M10.5 8l3-2v5l-3-2" stroke="#fff" stroke-width="1.1" fill="none"/></svg></div>
  <div class="ti" style="left:1211px;top:10px"><svg width="18" height="17" viewBox="0 0 18 17"><rect x="4.5" y="2.5" width="12" height="9" stroke="#fff" stroke-width="1.1" fill="none"/><path d="M10.5 11.5v3M7 15h7" stroke="#fff" stroke-width="1.1"/><rect x="0.5" y="0.5" width="4" height="6" stroke="#fff" stroke-width="1" fill="#202020"/></svg></div>
  <div class="tc" style="left:1226px;top:3px;width:70px">12:09 PM</div>
  <div class="tc" style="left:1226px;top:19px;width:70px">12/29/2021</div>
  <div class="ti" style="left:1301px;top:8px"><svg width="24" height="26" viewBox="0 0 24 26"><path d="M2 2h17v11h-9l-3 3v-3H2z" fill="#fff"/><path d="M5 5h11M5 7.5h11M5 10h8" stroke="#202020" stroke-width="1"/><circle cx="15" cy="17" r="6.2" fill="#202020" stroke="#aaa" stroke-width="1.2"/><text x="15" y="21" font-family="Liberation Sans" font-size="10" fill="#fff" text-anchor="middle">1</text></svg></div>
  <div class="ti" style="left:1334px;top:0;width:1px;height:37px;background:#5a5a5a"></div>
</div>
<div class="ti" style="left:424px;top:690px"><svg width="11" height="18" viewBox="0 0 11 18"><path d="M1 1.2c2 0 3.2.3 4.5 1.3C6.8 1.5 8 1.2 10 1.2M5.5 2.5v13M1 16.8c2 0 3.2-.3 4.5-1.3 1.3 1 2.5 1.3 4.5 1.3" stroke="#fff" stroke-width="2.8" fill="none" stroke-linecap="round"/><path d="M1 1.2c2 0 3.2.3 4.5 1.3C6.8 1.5 8 1.2 10 1.2M5.5 2.5v13M1 16.8c2 0 3.2-.3 4.5-1.3 1.3 1 2.5 1.3 4.5 1.3" stroke="#000" stroke-width="1" fill="none"/></svg></div>

</body></html>
